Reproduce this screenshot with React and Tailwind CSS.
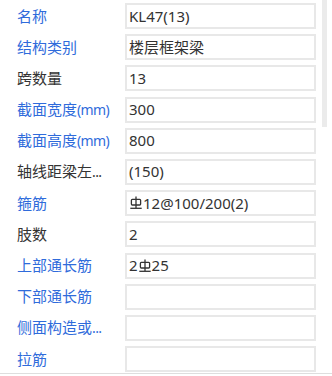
import React from "react";

const Rebar = () => (
  <svg width="12" height="14" viewBox="0 0 12 14" className="inline-block align-[-1px] mx-[1px]" fill="none" stroke="#333" strokeWidth="1.3">
    <line x1="6" y1="0.5" x2="6" y2="12" />
    <rect x="1.4" y="3.4" width="9.2" height="5.6" rx="0.9" />
    <line x1="0.3" y1="12.3" x2="11.7" y2="12.3" />
  </svg>
);

const rows = [
  { label: "名称", blue: true, value: "KL47(13)" },
  { label: "结构类别", blue: true, value: "楼层框架梁" },
  { label: "跨数量", blue: false, value: "13" },
  { label: "截面宽度", suffix: "(mm)", blue: true, value: "300" },
  { label: "截面高度", suffix: "(mm)", blue: true, value: "800" },
  { label: "轴线距梁左", suffix: "...", blue: false, value: "(150)" },
  { label: "箍筋", blue: true, value: (<><Rebar />12@100/200(2)</>) },
  { label: "肢数", blue: false, value: "2" },
  { label: "上部通长筋", blue: true, value: (<>2<Rebar />25</>) },
  { label: "下部通长筋", blue: true, value: "" },
  { label: "侧面构造或", suffix: "...", blue: true, value: "" },
  { label: "拉筋", blue: true, value: "" },
];

export default function App() {
  return (
    <div
      className="relative w-[332px] h-[376px] bg-white overflow-hidden"
      style={{ fontFamily: '"Noto Sans", "Noto Sans CJK SC", sans-serif' }}
    >
      <div className="flex flex-col gap-[5.2px] pt-[3px] h-[374px] border-b border-[#dedede]">
        {rows.map((r, i) => (
          <div key={i} className="flex items-center h-[26px]">
            <div
              className={`w-[125px] pl-[17px] text-[15px] leading-none whitespace-nowrap ${r.blue ? "text-[#2f6bdb]" : "text-[#333333]"}`}
            >
              {r.label}
              {r.suffix && <span className="text-[14px] tracking-[-0.6px]">{r.suffix}</span>}
            </div>
            <div className="w-[191px] h-[26px] border-2 border-[#e8e8e8] flex items-center pl-[2px] text-[15px] text-[#333333] leading-none whitespace-nowrap">
              {r.value}
            </div>
          </div>
        ))}
      </div>
      <div className="absolute left-[322px] top-0 w-[5px] h-[127px] bg-[#ebebeb]" />
    </div>
  );
}
